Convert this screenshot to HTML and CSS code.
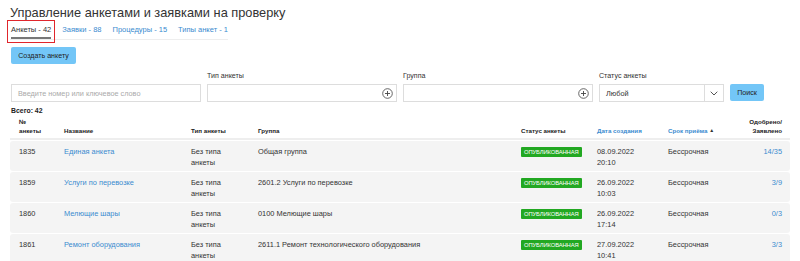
FILE: index.html
```html
<!DOCTYPE html>
<html lang="ru">
<head>
<meta charset="utf-8">
<title>Управление анкетами</title>
<link rel="stylesheet" href="styles.css">
</head>
<body>
<div class="page">
  <h1 class="title">Управление анкетами и заявками на проверку</h1>
  <nav class="tabs">
    <span class="tab active">Анкеты - 42</span>
    <a class="tab">Заявки - 88</a>
    <a class="tab">Процедуры - 15</a>
    <a class="tab">Типы анкет - 1</a>
  </nav>
  <button class="btn create">Создать анкету</button>

  <div class="filters">
    <div class="field">
      <label class="lbl">&nbsp;</label>
      <div class="input"><span class="ph">Введите номер или ключевое слово</span></div>
    </div>
    <div class="field">
      <label class="lbl">Тип анкеты</label>
      <div class="input">
        <svg class="plus" width="11" height="11" viewBox="0 0 11 11"><circle cx="5.5" cy="5.5" r="4.8" fill="none" stroke="#555" stroke-width="0.9"/><path d="M5.5 3v5M3 5.5h5" stroke="#444" stroke-width="0.9"/></svg>
      </div>
    </div>
    <div class="field">
      <label class="lbl">Группа</label>
      <div class="input">
        <svg class="plus" width="11" height="11" viewBox="0 0 11 11"><circle cx="5.5" cy="5.5" r="4.8" fill="none" stroke="#555" stroke-width="0.9"/><path d="M5.5 3v5M3 5.5h5" stroke="#444" stroke-width="0.9"/></svg>
      </div>
    </div>
    <div class="field">
      <label class="lbl">Статус анкеты</label>
      <div class="input select">
        <span class="val">Любой</span>
        <span class="arrow"><svg width="8" height="5" viewBox="0 0 8 5"><path d="M0.7 0.7L4 4 7.3 0.7" fill="none" stroke="#555" stroke-width="1"/></svg></span>
      </div>
    </div>
    <div class="field">
      <label class="lbl">&nbsp;</label>
      <button class="btn search">Поиск</button>
    </div>
  </div>

  <div class="total">Всего: 42</div>

  <div class="grid head">
    <div class="c">№<br>анкеты</div>
    <div class="c">Название</div>
    <div class="c">Тип анкеты</div>
    <div class="c">Группа</div>
    <div class="c">Статус анкеты</div>
    <div class="c link">Дата создания</div>
    <div class="c link">Срок приёма <span class="sort">▲</span></div>
    <div class="c right">Одобрено/<br>Заявлено</div>
  </div>

  <div class="grid row">
    <div class="c">1835</div>
    <div class="c"><a class="link">Единая анкета</a></div>
    <div class="c">Без типа<br>анкеты</div>
    <div class="c">Общая группа</div>
    <div class="c"><span class="badge">Опубликованная</span></div>
    <div class="c">08.09.2022<br>20:10</div>
    <div class="c">Бессрочная</div>
    <div class="c right"><a class="link">14/35</a></div>
  </div>
  <div class="grid row">
    <div class="c">1859</div>
    <div class="c"><a class="link">Услуги по перевозке</a></div>
    <div class="c">Без типа<br>анкеты</div>
    <div class="c">2601.2 Услуги по перевозке</div>
    <div class="c"><span class="badge">Опубликованная</span></div>
    <div class="c">26.09.2022<br>10:03</div>
    <div class="c">Бессрочная</div>
    <div class="c right"><a class="link">3/9</a></div>
  </div>
  <div class="grid row">
    <div class="c">1860</div>
    <div class="c"><a class="link">Мелющие шары</a></div>
    <div class="c">Без типа<br>анкеты</div>
    <div class="c">0100 Мелющие шары</div>
    <div class="c"><span class="badge">Опубликованная</span></div>
    <div class="c">26.09.2022<br>17:14</div>
    <div class="c">Бессрочная</div>
    <div class="c right"><a class="link">0/3</a></div>
  </div>
  <div class="grid row">
    <div class="c">1861</div>
    <div class="c"><a class="link">Ремонт оборудования</a></div>
    <div class="c">Без типа<br>анкеты</div>
    <div class="c">2611.1 Ремонт технологического оборудования</div>
    <div class="c"><span class="badge">Опубликованная</span></div>
    <div class="c">27.09.2022<br>10:41</div>
    <div class="c">Бессрочная</div>
    <div class="c right"><a class="link">3/3</a></div>
  </div>
</div>
</body>
</html>
```

FILE: styles.css
```css
* { box-sizing: border-box; }
html, body { margin: 0; padding: 0; background: #fff; }
body {
  font-family: "Liberation Sans", Arial, sans-serif;
  color: #333;
  font-size: 7.4px;
  overflow: hidden;
}
.page { padding: 0 10px; }

.title {
  margin: 0;
  padding-top: 3px;
  font-size: 12.8px;
  line-height: 19px;
  font-weight: normal;
  color: #333;
}

.tabs {
  display: flex;
  gap: 11px;
  width: fit-content;
  margin-top: 2px;
  padding-left: 1px;
  border-bottom: 1px solid #eee;
}
.tab {
  display: block;
  font-size: 7.5px;
  line-height: 12px;
  padding-bottom: 1px;
  border-bottom: 2px solid transparent;
  color: #3a8bcf;
}
.tab.active {
  color: #333;
  border-bottom-color: #777;
  outline: 1.5px solid #e0262c;
  outline-offset: 3px;
}

.btn {
  font-family: inherit;
  border: 0;
  border-radius: 2px;
  background: #73c6f7;
  color: #222;
  cursor: pointer;
}
.create {
  display: block;
  margin-top: 7px;
  margin-left: 1px;
  height: 17px;
  width: 65px;
  padding: 0;
  font-size: 7.1px;
}

.filters {
  display: grid;
  grid-template-columns: 190px 190px 190px 125px 34px;
  gap: 6px;
  margin-top: 7px;
  margin-left: 1px;
}
.field { display: flex; flex-direction: column; }
.lbl {
  font-size: 7.1px;
  line-height: 10px;
  color: #333;
  margin-bottom: 3px;
}
.input {
  position: relative;
  height: 18px;
  border: 1px solid #ddd;
  background: #fff;
  display: flex;
  align-items: center;
  padding: 0 6px;
}
.ph { color: #aaa; font-size: 7.3px; }
.plus { position: absolute; right: 3px; top: 3px; }
.select { padding: 0; }
.select .val { flex: 1; padding-left: 6px; font-size: 7.3px; color: #333; }
.select .arrow {
  width: 19px;
  height: 100%;
  border-left: 1px solid #ddd;
  display: flex;
  align-items: center;
  justify-content: center;
}
.search { height: 17px; font-size: 7.1px; padding: 0; }

.total {
  margin-top: 4px;
  margin-left: 1px;
  font-weight: bold;
  font-size: 6.9px;
  line-height: 10px;
  color: #222;
}

.grid {
  display: grid;
  grid-template-columns: 45px 127px 67px 263px 76px 71px 81px 50px;
}
.c { padding: 0 0 0 9px; }
.c.right { text-align: right; padding: 0 8px 0 0; }

.head {
  margin-top: 2px;
  align-items: end;
  font-weight: bold;
  font-size: 6.2px;
  line-height: 8.5px;
  color: #222;
  padding-bottom: 3px;
  border-bottom: 2px solid #eee;
}
.head .link { color: #3a8bcf; }
.sort { font-size: 5px; vertical-align: 1px; color: #333; }

.row {
  margin-top: 1px;
  height: 30px;
  background: #f4f4f4;
  border-radius: 3px;
  padding-top: 5px;
  line-height: 11px;
  font-size: 7.4px;
  color: #333;
}
.head + .row { margin-top: 1px; }
.link { color: #3a8bcf; text-decoration: none; }

.badge {
  display: inline-block;
  background: #22a822;
  color: #fff;
  text-transform: uppercase;
  font-size: 5.8px;
  line-height: 10px;
  padding: 0 3px;
  border-radius: 1px;
  letter-spacing: -0.1px;
}
```
